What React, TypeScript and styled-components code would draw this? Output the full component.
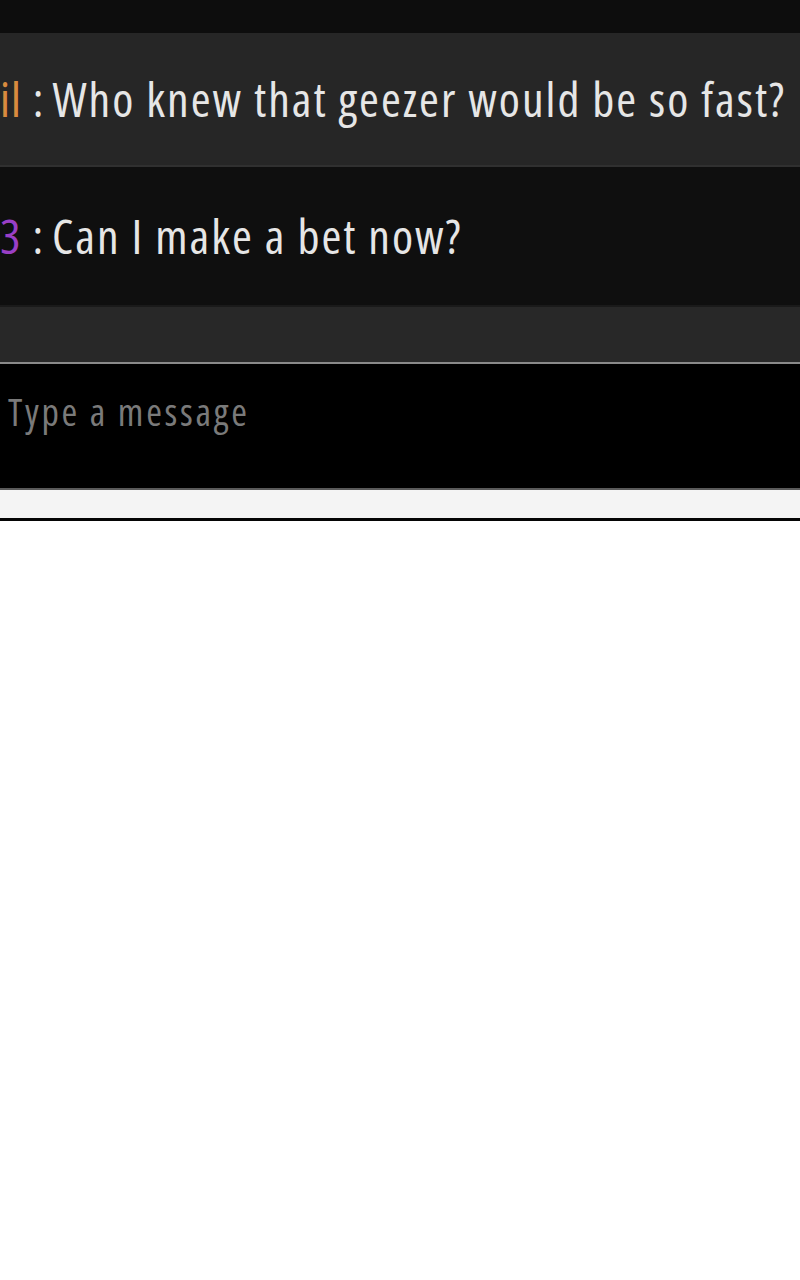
import React from "react";
import styled, { createGlobalStyle } from "styled-components";

const Global = createGlobalStyle`
  html, body { margin: 0; padding: 0; background: #ffffff; }
  body { font-family: "Open Sans", "Noto Sans", sans-serif; }
`;

const Chat = styled.div`
  width: 800px;
  display: flex;
  flex-direction: column;
  overflow: hidden;
  font-family: "Open Sans", "Noto Sans", sans-serif;
  font-stretch: 75%;
`;

const TopBand = styled.div`
  height: 33px;
  background: #0d0d0d;
`;

const Row = styled.div<{ $bg: string; $h: number; $border?: string }>`
  height: ${(p) => p.$h}px;
  background: ${(p) => p.$bg};
  box-sizing: border-box;
  border-bottom: ${(p) => (p.$border ? `2px solid ${p.$border}` : "none")};
  display: flex;
  align-items: center;
  white-space: nowrap;
  font-size: 48px;
  line-height: 1;
`;

const Name = styled.span<{ $color: string }>`
  color: ${(p) => p.$color};
  letter-spacing: 1px;
`;

const Colon = styled.span`
  color: #e8e8e8;
  margin: 0 9px 0 11px;
`;

const Message = styled.span`
  color: #e6e6e6;
  letter-spacing: 2px;
`;

const InputBar = styled.div`
  height: 128px;
  background: #000;
  border-top: 2px solid #8a8a8a;
  border-bottom: 2px solid #5a5a5a;
  box-sizing: border-box;
  padding: 25px 0 0 8px;
`;

const Placeholder = styled.div`
  color: #7a7a7a;
  font-size: 38px;
  line-height: 44px;
  letter-spacing: 2.7px;
`;

const Strip = styled.div`
  height: 28px;
  background: #f4f4f4;
  border-bottom: 3px solid #050505;
`;

export default function App() {
  return (
    <>
      <Global />
      <Chat>
        <TopBand />
        <Row $bg="#262626" $h={134} $border="#303030">
          <Name $color="#d98b3f">il</Name>
          <Colon>:</Colon>
          <Message>Who knew that geezer would be so fast?</Message>
        </Row>
        <Row $bg="#0f0f0f" $h={140} $border="#1a1a1a">
          <Name $color="#9a3fc6">3</Name>
          <Colon>:</Colon>
          <Message>Can I make a bet now?</Message>
        </Row>
        <Row $bg="#282828" $h={55} />
        <InputBar>
          <Placeholder>Type a message</Placeholder>
        </InputBar>
        <Strip />
      </Chat>
    </>
  );
}
